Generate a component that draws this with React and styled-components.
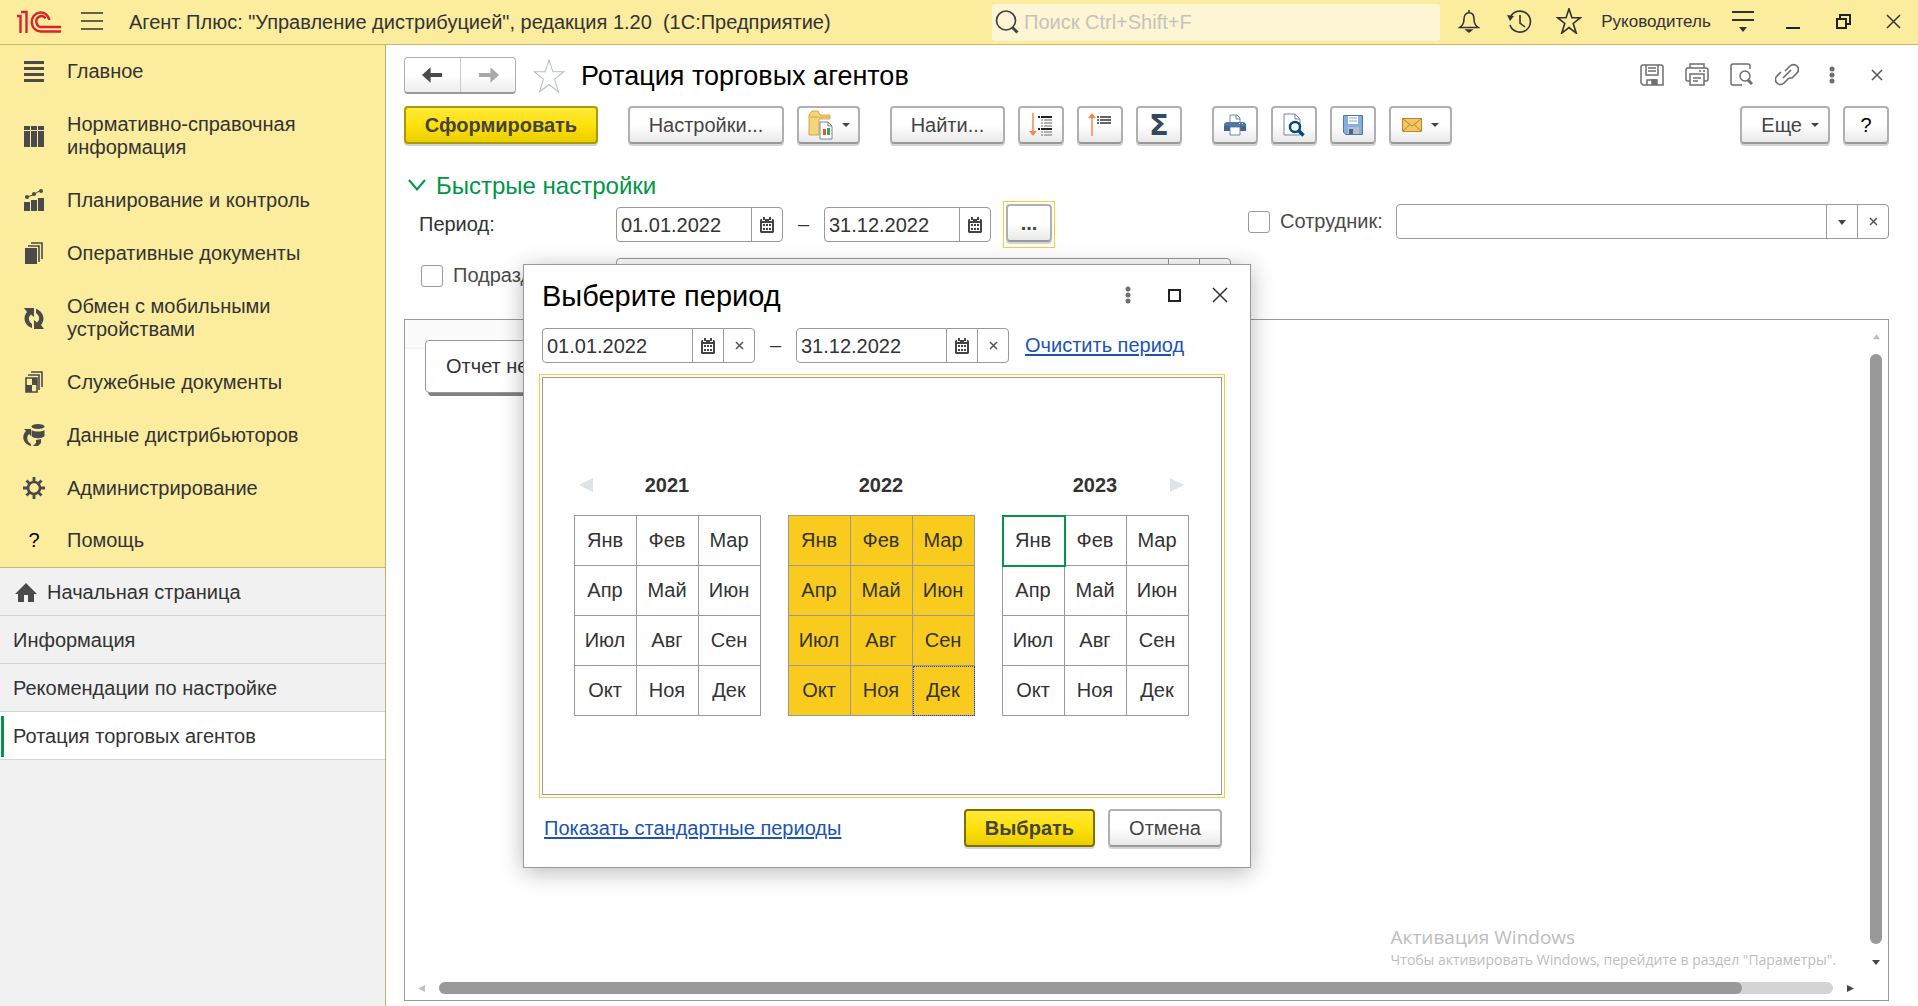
import React, { useState } from 'react';
import styled, { createGlobalStyle, css } from 'styled-components'

const MONTHS = ['Янв', 'Фев', 'Мар', 'Апр', 'Май', 'Июн', 'Июл', 'Авг', 'Сен', 'Окт', 'Ноя', 'Дек']

const SECTIONS = [
    { icon: 'main', title: 'Главное' },
    { icon: 'books', title: 'Нормативно-справочная информация' },
    { icon: 'chart', title: 'Планирование и контроль' },
    { icon: 'docs', title: 'Оперативные документы' },
    { icon: 'sync', title: 'Обмен с мобильными устройствами' },
    { icon: 'service', title: 'Служебные документы' },
    { icon: 'database', title: 'Данные дистрибьюторов' },
    { icon: 'gear', title: 'Администрирование' },
    { icon: 'help', title: 'Помощь' },
]

const OPEN_PAGES = [
    { title: 'Начальная страница', home: true },
    { title: 'Информация' },
    { title: 'Рекомендации по настройке' },
    { title: 'Ротация торговых агентов', active: true },
]

// ---------- icons ----------

const SECTION_ICONS = {
    main: <path d="M1 1h20v3H1zM1 7h20v3H1zM1 13h20v3H1zM1 19h20v3H1z" />,
    books: <path d="M1 1h6v4H1zM8 1h6v4H8zM15 1h6v4h-6zM1 6h6v16H1zM8 6h6v16H8zM15 6h6v16h-6z" />,
    chart: <>
        <path d="M1 13h6v9H1zM8 11h6v11H8zM15 9h6v13h-6z" />
        <path d="M4 8l6-2 8-5" fill="none" stroke="#4a4a4a" />
        <circle cx="4" cy="8" r="2" /><circle cx="11" cy="5" r="2" /><circle cx="18" cy="2" r="2" />
    </>,
    docs: <>
        <path d="M2 6h12v16H2z" />
        <path d="M5 4h11v16M8 1h11v16" fill="none" stroke="#4a4a4a" strokeWidth="1.600" />
    </>,
    sync: <>
        <path d="M1 1h10v9L8 7.500C5 10 5 14 9 17v4C2 19-1 11 4 5z" />
        <path d="M21 22H11v-9l3 2.500c3-2.500 3-6.500-1-9.500V2c7 2 10 10 5 16z" />
    </>,
    service: <>
        <path d="M3 7h11v14H3z" fill="none" stroke="#4a4a4a" strokeWidth="1.600" />
        <path d="M3 14h6v7H3zM9 7h5v7H9z" />
        <path d="M5 4h11v15M8 1h11v15" fill="none" stroke="#4a4a4a" strokeWidth="1.600" />
    </>,
    database: <>
        <ellipse cx="15" cy="2.500" rx="6.500" ry="2.500" />
        <path d="M8.500 6c3 2 10 2 13 0v6c-2 3-11 3-13 0z" />
        <path d="M1 5h7v7L6 10c-3 3-2 8 2 10v2C0 20-2 12 3 7zM13 16l5-1v4l-3 3h-5l3-3z" />
    </>,
    gear: <>
        <circle cx="11" cy="11" r="6" fill="none" stroke="#4a4a4a" strokeWidth="2.600" />
        <path d="M11 0v5M11 17v5M0 11h5M17 11h5M3.500 3.500l3 3M15.500 15.500l3 3M3.500 18.500l3-3M15.500 6.500l3-3" fill="none" stroke="#4a4a4a" strokeWidth="2.800" />
    </>,
}

const SectionIcon = ({ name }) => (
    <svg width="22" height="23" viewBox="0 0 22 23" fill="#4a4a4a">{SECTION_ICONS[name]}</svg>
)

const Logo = () => (
    <svg width="45" height="24" viewBox="0 0 45 24" fill="none" stroke="#d8232a">
        <path d="M0 6h3.500v17M4 2h5.500v21" strokeWidth="2.400" />
        <path d="M44 21.500H24a9 9.500 0 1 1 8.500-11.500" strokeWidth="2.400" />
        <path d="M44 17H25a5 5.500 0 1 1 3.500-8.500" strokeWidth="2.400" />
    </svg>
)

const StarIcon = ({ size = 26, color = '#333', thick = 1.500 }) => (
    <svg width={size} height={size} viewBox="0 0 30 32" fill="none" stroke={color} strokeWidth={thick}>
        <path d="M15 1l3.600 11H29l-8.800 7L24 31l-9-7-9 7 3.800-12L1 12h10.400z" />
    </svg>
)

const BurgerIcon = () => (
    <svg width="22" height="18" viewBox="0 0 22 18" stroke="#333" strokeWidth="1.500">
        <path d="M0 1h22M0 9h22M0 17h22" />
    </svg>
)

const SearchIcon = () => (
    <svg width="24" height="24" viewBox="0 0 24 24" fill="none" stroke="#444">
        <circle cx="11" cy="10.500" r="9.500" strokeWidth="1.700" />
        <path d="M17.500 17.500l5 5" strokeWidth="3" />
    </svg>
)

const BellIcon = () => (
    <svg width="22" height="25" viewBox="0 0 24 25" fill="none" stroke="#333" strokeWidth="1.700">
        <path d="M12 0v3M2 19c3-2 4.500-4 4.500-9 0-4 2-7 5.500-7s5.500 3 5.500 7c0 5 1.500 7 4.500 9z" />
        <path d="M7 21h10l-5 4z" fill="#333" stroke="none" />
    </svg>
)

const HistoryIcon = () => (
    <svg width="26" height="25" viewBox="0 0 26 25" fill="none" stroke="#333" strokeWidth="1.600">
        <path d="M4.500 8A10.500 10.500 0 1 1 4 16M14 6v8l5 4" />
        <path d="M1 6l7 1-4 5z" fill="#333" stroke="none" />
    </svg>
)

const UserMenuIcon = () => (
    <svg width="22" height="22" viewBox="0 0 22 22" stroke="#333" strokeWidth="2">
        <path d="M0 2h22M0 10h22" />
        <path d="M7 17h8l-4 5z" fill="#333" stroke="none" />
    </svg>
)

const MinimizeIcon = () => (
    <svg width="14" height="18" viewBox="0 0 14 18"><path d="M0 15h14v2H0z" fill="#222" /></svg>
)

const RestoreIcon = () => (
    <svg width="15" height="15" viewBox="0 0 15 15" fill="none" stroke="#222" strokeWidth="2">
        <path d="M1 5h9v9H1zM4 4V1h10v9h-3" />
    </svg>
)

const CrossIcon = ({ size = 15, color = '#333', thick = 1.500 }) => (
    <svg width={size} height={size} viewBox={`0 0 ${size} ${size}`} stroke={color} strokeWidth={thick}>
        <path d={`M1 1L${size - 1} ${size - 1}M${size - 1} 1L1 ${size - 1}`} />
    </svg>
)

const SquareIcon = () => (
    <svg width="13" height="13" viewBox="0 0 13 13"><path d="M1 1h11v11H1z" fill="none" stroke="#222" strokeWidth="2" /></svg>
)

const DotsIcon = () => (
    <svg width="6" height="18" viewBox="0 0 6 18" fill="#6e6e6e">
        <circle cx="3" cy="3" r="2.500" /><circle cx="3" cy="9" r="2.500" /><circle cx="3" cy="15" r="2.500" />
    </svg>
)

const ArrowIcon = ({ flip, color }) => (
    <svg width="21" height="16" viewBox="0 0 22 16" fill={color}>
        <path d={flip ? 'M22 8l-9-8v6H1v4h12v6z' : 'M0 8l9-8v6h12v4H9v6z'} />
    </svg>
)

const Triangle = ({ dir = 'down', size = 8, color = '#444' }) => {
    const shapes = { down: 'M0 2h8L4 7z', up: 'M4 1l4 6H0z', left: 'M0 4l8-4v8z', right: 'M8 4L0 0v8z' }
    return <svg width={size} height={size} viewBox="0 0 8 8" fill={color}><path d={shapes[dir]} /></svg>
}

const MenuMark = () => (
    <svg width="8" height="4" viewBox="0 0 8 4" fill="#444"><path d="M0 0h8L4 4z" /></svg>
)

const ChevronIcon = () => (
    <svg width="18" height="12" viewBox="0 0 18 12" fill="none" stroke="#009646" strokeWidth="2"><path d="M1 1l8 9.500L17 1" /></svg>
)

const CalendarIcon = () => (
    <svg width="14" height="16" viewBox="0 0 14 16">
        <path d="M1 2h12l1 1v12l-1 1H1l-1-1V3z" fill="#444" />
        <path d="M2 6h10v8H2zM2 1h3v3H2zM9 1h3v3H9z" fill="#fff" />
        <path d="M3 0h2v3H3zM9 0h2v3H9zM3 7h2v2H3zM6 7h2v2H6zM9 7h2v2H9zM3 11h2v2H3zM6 11h2v2H6zM9 11h2v2H9z" fill="#444" />
    </svg>
)

const HomeIcon = () => (
    <svg width="22" height="20" viewBox="0 0 22 20" fill="#4a4a4a"><path d="M11 0l11 11h-3v8h-6v-7H9v7H3v-8H0z" /></svg>
)

const SaveIcon = () => (
    <svg width="24" height="22" viewBox="0 0 24 22" fill="none" stroke="#6e6e6e" strokeWidth="1.500">
        <path d="M1 3a2 2 0 0 1 2-2h18a2 2 0 0 1 2 2v18H3l-2-2zM6 1v10h12V1M8 4h8M8 7h8M7 21v-5h10v5" />
        <path d="M12 16h4v4h-4z" fill="#6e6e6e" />
    </svg>
)

const PrintIcon = () => (
    <svg width="24" height="23" viewBox="0 0 24 23" fill="none" stroke="#6e6e6e" strokeWidth="1.500">
        <path d="M5 5V1h14v4M5 18H3a2 2 0 0 1-2-2V7a2 2 0 0 1 2-2h18a2 2 0 0 1 2 2v9a2 2 0 0 1-2 2h-2M5 11h14v11H5zM8 15h8M8 18h5M14 8h2M18 8h2" />
    </svg>
)

const PreviewIcon = () => (
    <svg width="23" height="23" viewBox="0 0 23 23" fill="none" stroke="#6e6e6e" strokeWidth="1.500">
        <path d="M20 6V3a2 2 0 0 0-2-2H3a2 2 0 0 0-2 2v17a2 2 0 0 0 2 2h9" />
        <circle cx="15" cy="13" r="5" /><path d="M18 17l4 4" strokeWidth="3" />
    </svg>
)

const LinkIcon = () => (
    <svg width="24" height="23" viewBox="0 0 24 23" fill="none" stroke="#6e6e6e" strokeWidth="1.700">
        <path d="M10 8l5-5a4.800 4.800 0 0 1 7 7l-5 5h-3M14 15l-5 5a4.800 4.800 0 0 1-7-7l4-4M8 15l8-8" />
    </svg>
)

const FolderIcon = () => (
    <svg width="25" height="30" viewBox="0 0 25 30">
        <path d="M1 25V5l3-4h6l2 4h10v4H11v16z" fill="#f3d67a" stroke="#d9a548" />
        <path d="M2 7h20" stroke="#d9a548" />
        <path d="M12 12h8l4 4v13H12z" fill="#fff" stroke="#7287a0" />
        <path d="M20 12v4h4" fill="none" stroke="#7287a0" />
        <path d="M15 19h3v6h-3z" fill="#e05a33" /><path d="M19 18h3v7h-3z" fill="#3da558" />
    </svg>
)

const ExpandIcon = () => (
    <svg width="24" height="24" viewBox="0 0 24 24" fill="none" strokeWidth="1.500">
        <path d="M4 0v20" stroke="#f08a50" /><path d="M0 18h8l-4 5z" fill="#f08a50" />
        <path d="M9 4h2M12 4h11M9 16h2M12 16h11" stroke="#222" strokeWidth="2" />
        <path d="M12 7h2M15 7h8M12 10h2M15 10h8M12 13h2M15 13h8M12 19h2M15 19h8M12 22h2M15 22h8" stroke="#999" />
    </svg>
)

const CollapseIcon = () => (
    <svg width="24" height="24" viewBox="0 0 24 24" fill="none" strokeWidth="1.500">
        <path d="M4 4v19" stroke="#f08a50" /><path d="M0 5h8L4 0z" fill="#f08a50" />
        <path d="M9 4h2M12 4h11M9 7h2M12 7h11M9 10h2M12 10h11" stroke="#333" />
    </svg>
)

const PrinterColorIcon = () => (
    <svg width="22" height="22" viewBox="0 0 22 22">
        <path d="M6 9V1h7l3 3v5" fill="#fff" stroke="#7287a0" /><path d="M12 1v4h4" fill="none" stroke="#7287a0" />
        <path d="M2 8h18l2 2v7H0v-7z" fill="#4f78a8" /><path d="M0 12h22v5H0z" fill="#40658f" />
        <path d="M6 13h10v8H6z" fill="#fff" stroke="#7287a0" /><path d="M15 9h1v1h-1zM18 9h1v1h-1z" fill="#fff" />
    </svg>
)

const PreviewColorIcon = () => (
    <svg width="22" height="24" viewBox="0 0 22 24" fill="none">
        <path d="M1 1h11l5 5v16H1z" fill="#fff" stroke="#7287a0" /><path d="M12 1v5h5" stroke="#7287a0" />
        <circle cx="12" cy="14" r="5" fill="#fff" stroke="#004a80" strokeWidth="2.500" />
        <path d="M15.500 17.500l5 5" stroke="#004a80" strokeWidth="3.500" />
    </svg>
)

const DisketteIcon = () => (
    <svg width="20" height="20" viewBox="0 0 20 20">
        <path d="M.5.5h19v19H3l-2.500-2z" fill="#86afe0" stroke="#4f78a8" />
        <path d="M5 1h10v8H5z" fill="#fff" /><path d="M6 3h8M6 6h8" stroke="#8aa5c6" />
        <path d="M5 12h11v7H5z" fill="#b9bfc2" /><path d="M6 14h4v5H6z" fill="#45668a" />
    </svg>
)

const MailIcon = () => (
    <svg width="20" height="14" viewBox="0 0 20 14">
        <path d="M.5.5h19v13H.5z" fill="#f2c766" stroke="#c08325" />
        <path d="M1 1l9 7 9-7M1 13l7-6.500M19 13l-7-6.500" fill="none" stroke="#c08325" />
    </svg>
)

// ---------- controls ----------

function DateField({ label, value, clearable, width }) {
    const [date, setDate] = useState(value)
    return (
        <Field $width={width}>
            <FieldInput aria-label={label} value={date} onChange={ev => setDate(ev.target.value)} />
            <FieldButton aria-label="Календарь"><CalendarIcon /></FieldButton>
            {clearable &&
                <FieldButton aria-label="Очистить" onClick={() => setDate('')}><CrossIcon size={9} color="#555" /></FieldButton>
            }
        </Field>
    )
}

function LookupField({ id }) {
    return (
        <Field>
            <FieldInput id={id} />
            <FieldButton aria-label="Выбрать из списка"><Triangle /></FieldButton>
            <FieldButton aria-label="Очистить"><CrossIcon size={9} color="#555" /></FieldButton>
        </Field>
    )
}

function YearBlock({ year, selected, current, focused, prev, next }) {
    return (
        <div>
            <YearHead>
                {prev && <YearArrow aria-label="Предыдущий год" $side="left"><Triangle dir="left" size={14} color="#dfe3e7" /></YearArrow>}
                {year}
                {next && <YearArrow aria-label="Следующий год" $side="right"><Triangle dir="right" size={14} color="#dfe3e7" /></YearArrow>}
            </YearHead>
            <MonthGrid>
                {MONTHS.map(month => (
                    <Month
                        key={month}
                        $selected={selected}
                        $current={month === current}
                        $focused={month === focused}
                    >{month}</Month>
                ))}
            </MonthGrid>
        </div>
    )
}

function PeriodDialog() {
    return (
        <Dialog role="dialog" aria-labelledby="period-title">
            <DialogHead>
                <DialogTitle id="period-title">Выберите период</DialogTitle>
                <DialogTool aria-label="Еще"><DotsIcon /></DialogTool>
                <DialogTool aria-label="Развернуть"><SquareIcon /></DialogTool>
                <DialogTool aria-label="Закрыть"><CrossIcon size={16} /></DialogTool>
            </DialogHead>
            <DialogDates>
                <DateField label="Начало периода" value="01.01.2022" width={213} clearable />
                <Dash>–</Dash>
                <DateField label="Конец периода" value="31.12.2022" width={213} clearable />
                <TextLink href="#clear">Очистить период</TextLink>
            </DialogDates>
            <Calendar>
                <YearBlock year={2021} prev />
                <YearBlock year={2022} selected focused="Дек" />
                <YearBlock year={2023} current="Янв" next />
            </Calendar>
            <DialogFoot>
                <TextLink href="#standard">Показать стандартные периоды</TextLink>
                <Button $primary $dark $width={131}>Выбрать</Button>
                <Button $width={114}>Отмена</Button>
            </DialogFoot>
        </Dialog>
    )
}

function Sidebar() {
    return (
        <Side>
            <Sections>
                {SECTIONS.map(({ icon, title }) => (
                    <SectionItem key={title} href="#section">
                        <SectionMark>{icon === 'help' ? '?' : <SectionIcon name={icon} />}</SectionMark>
                        {title}
                    </SectionItem>
                ))}
            </Sections>
            {OPEN_PAGES.map(({ title, home, active }) => (
                <PageItem key={title} href="#page" $active={active} $home={home}>
                    {home && <HomeIcon />}
                    {title}
                </PageItem>
            ))}
        </Side>
    )
}

function Header() {
    return (
        <TopBar>
            <Logo />
            <TopButton aria-label="Меню" $width={60}><BurgerIcon /></TopButton>
            <AppTitle>Агент Плюс: "Управление дистрибуцией", редакция 1.20&nbsp; (1С:Предприятие)</AppTitle>
            <Search>
                <SearchIcon />
                <SearchInput aria-label="Поиск" placeholder="Поиск Ctrl+Shift+F" />
            </Search>
            <TopButton aria-label="Уведомления"><BellIcon /></TopButton>
            <TopButton aria-label="История"><HistoryIcon /></TopButton>
            <TopButton aria-label="Избранное"><StarIcon thick={2} /></TopButton>
            <TopButton $width={124}>Руководитель</TopButton>
            <TopButton aria-label="Сервис"><UserMenuIcon /></TopButton>
            <TopButton aria-label="Свернуть"><MinimizeIcon /></TopButton>
            <TopButton aria-label="Восстановить"><RestoreIcon /></TopButton>
            <TopButton aria-label="Закрыть"><CrossIcon /></TopButton>
        </TopBar>
    )
}

export default function App() {
    return (
        <Page>
            <GlobalStyle />
            <Header />
            <Body>
                <Sidebar />
                <Main>
                    <TitleRow>
                        <History>
                            <HistoryButton aria-label="Назад"><ArrowIcon color="#4a4a4a" /></HistoryButton>
                            <HistoryButton aria-label="Вперед"><ArrowIcon flip color="#a8a8a8" /></HistoryButton>
                        </History>
                        <FavButton aria-label="В избранное"><StarIcon size={34} color="#b8bec6" thick={1} /></FavButton>
                        <PageTitle>Ротация торговых агентов</PageTitle>
                        <PageTool aria-label="Сохранить"><SaveIcon /></PageTool>
                        <PageTool aria-label="Печать"><PrintIcon /></PageTool>
                        <PageTool aria-label="Просмотр"><PreviewIcon /></PageTool>
                        <PageTool aria-label="Ссылка"><LinkIcon /></PageTool>
                        <PageTool aria-label="Еще"><DotsIcon /></PageTool>
                        <PageTool aria-label="Закрыть"><CrossIcon size={12} color="#555" /></PageTool>
                    </TitleRow>

                    <Toolbar>
                        <Group><Button $primary $width={194}>Сформировать</Button></Group>
                        <Group>
                            <Button $width={156}>Настройки...</Button>
                            <Button $width={63} aria-label="Варианты отчета"><FolderIcon /><MenuMark /></Button>
                        </Group>
                        <Group>
                            <Button $width={115}>Найти...</Button>
                            <Button aria-label="Развернуть группы"><ExpandIcon /></Button>
                            <Button aria-label="Свернуть группы"><CollapseIcon /></Button>
                            <Button aria-label="Сумма"><Sigma>Σ</Sigma></Button>
                        </Group>
                        <Group>
                            <Button aria-label="Печать"><PrinterColorIcon /></Button>
                            <Button aria-label="Предварительный просмотр"><PreviewColorIcon /></Button>
                            <Button aria-label="Сохранить"><DisketteIcon /></Button>
                            <Button $width={63} aria-label="Отправить"><MailIcon /><MenuMark /></Button>
                        </Group>
                        <Group $right>
                            <Button $width={90} $menu>Еще<MenuMark /></Button>
                            <Button $black>?</Button>
                        </Group>
                    </Toolbar>

                    <SettingsToggle><ChevronIcon />Быстрые настройки</SettingsToggle>

                    <Filters>
                        <div>
                            <PeriodRow>
                                <RowLabel>Период:</RowLabel>
                                <DateField label="Дата начала" value="01.01.2022" width={167} />
                                <Dash>–</Dash>
                                <DateField label="Дата окончания" value="31.12.2022" width={167} />
                                <FocusRing><Button aria-label="Выбрать период" $dots>...</Button></FocusRing>
                            </PeriodRow>
                            <FilterRow>
                                <CheckLabel $width={195}><Check type="checkbox" />Подразделение:</CheckLabel>
                                <LookupField id="department" />
                            </FilterRow>
                        </div>
                        <EmployeeRow>
                            <CheckLabel $width={148}><Check type="checkbox" />Сотрудник:</CheckLabel>
                            <LookupField id="employee" />
                        </EmployeeRow>
                    </Filters>

                    <Report>
                        <ReportBody>
                            <ReportStrip />
                            <ReportNote>Отчет не сформирован</ReportNote>
                            <Watermark>
                                <WatermarkTitle>Активация Windows</WatermarkTitle>
                                <WatermarkText>Чтобы активировать Windows, перейдите в раздел "Параметры".</WatermarkText>
                            </Watermark>
                        </ReportBody>
                        <VScroll>
                            <Triangle dir="up" color="#c0c0c0" size={7} />
                            <VThumb />
                            <Triangle size={8} />
                        </VScroll>
                        <HScroll>
                            <Triangle dir="left" color="#c0c0c0" size={7} />
                            <HTrack><HThumb /></HTrack>
                            <Triangle dir="right" size={7} />
                        </HScroll>
                    </Report>

                    <PeriodDialog />
                </Main>
            </Body>
        </Page>
    )
}

// ---------- styles ----------

const GlobalStyle = createGlobalStyle`
    * { box-sizing: border-box; }
    body {
        margin: 0;
        overflow: hidden;
        background: #fff;
        color: #333;
        font: 20px/23px "Liberation Sans", Arial, sans-serif;
    }
    button, input { font: inherit; color: inherit; }
    button { padding: 0; border: 0; background: none; cursor: pointer; }
    svg { flex: none; display: block; }
`

const center = css`
    display: flex;
    align-items: center;
    justify-content: center;
`

const Page = styled.div`
    display: flex;
    flex-direction: column;
    height: 100vh;
`

const TopBar = styled.header`
    display: flex;
    align-items: center;
    height: 45px;
    padding-left: 17px;
    background: #fbec9e;
    border-bottom: 1px solid #c9bb66;
`

const TopButton = styled.button`
    ${center}
    flex: none;
    width: ${({ $width }) => $width || 50}px;
    height: 44px;
    padding-bottom: 2px;
    font-size: 17px;
`

const AppTitle = styled.div`
    flex: 1;
    padding-left: 7px;
    white-space: nowrap;
`

const Search = styled.label`
    display: flex;
    align-items: center;
    width: 448px;
    height: 37px;
    margin-right: 4px;
    padding-left: 3px;
    border-radius: 3px;
    background: #fdf5d3;
`

const SearchInput = styled.input`
    flex: 1;
    min-width: 0;
    padding: 0 0 0 5px;
    border: 0;
    outline: 0;
    background: none;
    &::placeholder { color: #c4c4bc; opacity: 1; }
`

const Body = styled.div`
    display: flex;
    flex: 1;
    min-height: 0;
`

const Side = styled.aside`
    flex: none;
    width: 386px;
    background: #f1f1f1;
    border-right: 1px solid #bdb06a;
`

const Sections = styled.nav`
    background: #fbec9e;
    border-bottom: 1px solid #c9bb66;
`

const SectionItem = styled.a`
    display: flex;
    align-items: center;
    padding: 15px 60px 15px 23px;
    color: #333;
    text-decoration: none;
    &:last-child { padding: 14px 60px 15px 23px; }
`

const SectionMark = styled.span`
    ${center}
    flex: none;
    width: 22px;
    height: 23px;
    margin-right: 22px;
    color: #000;
`

const PageItem = styled.a`
    display: flex;
    align-items: center;
    gap: 10px;
    height: 48px;
    padding: 2px 13px 0 ${({ $home }) => $home ? 15 : 13}px;
    border-bottom: 1px solid #d4d4d4;
    color: #333;
    text-decoration: none;
    ${({ $active }) => $active && css`
        background: linear-gradient(#009646, #009646) 1px 4px / 3px 41px no-repeat #fff;
    `}
`

const Main = styled.main`
    position: relative;
    display: flex;
    flex: 1;
    flex-direction: column;
    min-width: 0;
    padding: 12px 29px 5px 18px;
`

const TitleRow = styled.div`
    display: flex;
    align-items: center;
    height: 37px;
    margin-right: -10px;
`

const History = styled.div`
    display: flex;
    border: 1px solid #b0b0b0;
    border-bottom: 2px solid #999;
    border-radius: 4px;
    background: linear-gradient(#fff 50%, #ededed);
`

const HistoryButton = styled.button`
    ${center}
    width: 55px;
    height: 34px;
    & + & { border-left: 1px solid #ccc; }
`

const FavButton = styled.button`
    margin: 0 15px 0 16px;
`

const PageTitle = styled.h1`
    flex: 1;
    margin: 0;
    color: #000;
    font-size: 27px;
    font-weight: normal;
    line-height: 32px;
    white-space: nowrap;
`

const PageTool = styled.button`
    ${center}
    width: 45px;
    height: 34px;
    padding-bottom: 2px;
`

const Toolbar = styled.div`
    display: flex;
    gap: 30px;
    margin-top: 12px;
`

const Group = styled.div`
    display: flex;
    gap: 13px;
    ${({ $right }) => $right && 'margin-left: auto;'}
`

const Button = styled.button`
    ${center}
    gap: 9px;
    flex: none;
    width: ${({ $width }) => $width || 46}px;
    height: 38px;
    border: 2px solid #b0b0b0;
    border-bottom-color: #999;
    border-radius: 4px;
    background: linear-gradient(#fff 50%, #e9e9e9);
    box-shadow: 0 2px 0 #d4d4d4;
    color: ${({ $black }) => $black ? '#000' : '#444'};
    ${({ $dots }) => $dots && 'font-weight: bold;'}
    ${({ $menu }) => $menu && 'justify-content: flex-end; padding-right: 9px;'}
    ${({ $primary, $dark }) => $primary && css`
        border-color: ${$dark ? '#7d6f00' : '#a99a00'};
        background: linear-gradient(#ffe93c, #ffe10a 50%, #e9cd00);
        font-weight: bold;
    `}
`

const Sigma = styled.span`
    color: #34495a;
    font: bold 29px/30px "DejaVu Sans", sans-serif;
`

const SettingsToggle = styled.button`
    display: flex;
    align-items: center;
    align-self: flex-start;
    gap: 10px;
    height: 26px;
    margin: 28px 0 3px;
    padding-left: 4px;
    color: #009646;
    font-size: 24px;
`

const Filters = styled.div`
    display: grid;
    grid-template-columns: 827fr 641fr;
    gap: 17px;
`

const PeriodRow = styled.div`
    display: flex;
    align-items: center;
    height: 47px;
    padding-left: 15px;
`

const RowLabel = styled.span`
    width: 197px;
`

const FilterRow = styled.div`
    display: flex;
    align-items: center;
    margin-top: 10px;
    padding-left: 17px;
`

const EmployeeRow = styled.div`
    display: flex;
    align-items: flex-start;
    padding-top: 3px;
`

const CheckLabel = styled.label`
    display: flex;
    align-items: center;
    flex: none;
    gap: 10px;
    width: ${({ $width }) => $width}px;
    height: 35px;
    color: #4a4a4a;
`

const Check = styled.input`
    appearance: none;
    width: 22px;
    height: 22px;
    margin: 0;
    border: 1px solid #999;
    border-radius: 3px;
    background: #fff;
`

const Field = styled.div`
    display: flex;
    height: 35px;
    border: 1px solid #999;
    border-radius: 4px;
    background: #fff;
    ${({ $width }) => $width ? `width: ${$width}px;` : 'flex: 1;'}
`

const FieldInput = styled.input`
    flex: 1;
    min-width: 0;
    padding: 1px 0 0 4px;
    border: 0;
    outline: 0;
    background: none;
`

const FieldButton = styled.button`
    ${center}
    width: 31px;
    border-left: 1px solid #999;
`

const Dash = styled.span`
    width: 41px;
    text-align: center;
`

const FocusRing = styled.div`
    margin-left: 12px;
    padding: 2px 2px 5px;
    border: 1px solid #f7cf2e;
`

const Report = styled.section`
    display: grid;
    grid-template: 1fr 24px / 1fr 35px;
    flex: 1;
    min-height: 0;
    margin-top: 26px;
    border: 1px solid #999;
`

const ReportBody = styled.div`
    display: flex;
    flex-direction: column;
    align-items: flex-start;
`

const ReportStrip = styled.div`
    width: 400px;
    height: 29px;
    margin-bottom: -9px;
    background: #fbfbfb;
    border-bottom: 1px solid #f3f3f3;
`

const ReportNote = styled.div`
    margin-left: 20px;
    padding: 14px 20px;
    border: 1px solid #999;
    border-radius: 4px;
    background: #fff;
    box-shadow: 3px 3px 0 #808080;
`

const Watermark = styled.div`
    margin: auto 17px 5px auto;
    color: #bdbdbd;
    font-family: "Open Sans", "Noto Sans", sans-serif;
    white-space: nowrap;
`

const WatermarkTitle = styled.div`
    font-size: 19px;
    line-height: 24px;
`

const WatermarkText = styled.div`
    font-size: 14px;
    line-height: 22px;
`

const VScroll = styled.div`
    display: flex;
    flex-direction: column;
    align-items: center;
    justify-self: end;
    width: 24px;
    padding: 13px 0 10px;
`

const VThumb = styled.div`
    flex: 1;
    width: 12px;
    margin: 14px 0;
    border-radius: 6px;
    background: #999;
`

const HScroll = styled.div`
    display: flex;
    align-items: center;
    padding-left: 13px;
    margin-right: -1px;
`

const HTrack = styled.div`
    flex: 1;
    height: 12px;
    margin: 0 14px;
    border-radius: 6px;
    background: #d4d4d4;
`

const HThumb = styled.div`
    width: 93.5%;
    height: 12px;
    border-radius: 6px;
    background: #999;
`

// floats over the report page
const Dialog = styled.div`
    position: absolute;
    top: 219px;
    left: 137px;
    width: 728px;
    padding: 12px 28px 20px 18px;
    border: 1px solid #999;
    background: #fff;
    box-shadow: 0 4px 22px rgba(0, 0, 0, 0.28);
`

const DialogHead = styled.div`
    display: flex;
    align-items: center;
    height: 38px;
    margin-right: -21px;
`

const DialogTitle = styled.h2`
    flex: 1;
    margin: 0;
    color: #000;
    font-size: 29px;
    font-weight: normal;
    line-height: 32px;
`

const DialogTool = styled.button`
    ${center}
    width: 46px;
    height: 34px;
    padding-bottom: 2px;
`

const DialogDates = styled.div`
    display: flex;
    align-items: center;
    margin-top: 13px;
`

const TextLink = styled.a`
    margin: 0 auto 0 16px;
    color: #1d54b0;
    white-space: nowrap;
    text-underline-offset: 2px;
`

const Calendar = styled.div`
    ${center}
    gap: 27px;
    height: 418px;
    margin-top: 14px;
    padding: 17px 2px 0 0;
    border: 1px solid #999;
    outline: 1px solid #f7cf2e;
    outline-offset: 2px;
`

const YearHead = styled.div`
    ${center}
    position: relative;
    height: 24px;
    margin-bottom: 18px;
    font-weight: bold;
`

const YearArrow = styled.button`
    position: absolute;
    ${({ $side }) => $side}: 5px;
`

const MonthGrid = styled.div`
    display: grid;
    grid-template-columns: repeat(3, 62px);
    grid-auto-rows: 50px;
    border: solid #999;
    border-width: 1px 0 0 1px;
`

const Month = styled.button`
    border: solid #999;
    border-width: 0 1px 1px 0;
    background: ${({ $selected }) => $selected ? '#f9cb1e' : '#fff'};
    ${({ $current }) => $current && css`
        z-index: 1;
        outline: 2px solid #009646;
        outline-offset: -1px;
    `}
    ${({ $focused }) => $focused && css`
        z-index: 1;
        outline: 1px dotted #1c3fd0;
        outline-offset: -1px;
    `}
`

const DialogFoot = styled.div`
    display: flex;
    align-items: center;
    gap: 13px;
    margin-top: 14px;
    ${TextLink} { margin-left: 2px; }
`
